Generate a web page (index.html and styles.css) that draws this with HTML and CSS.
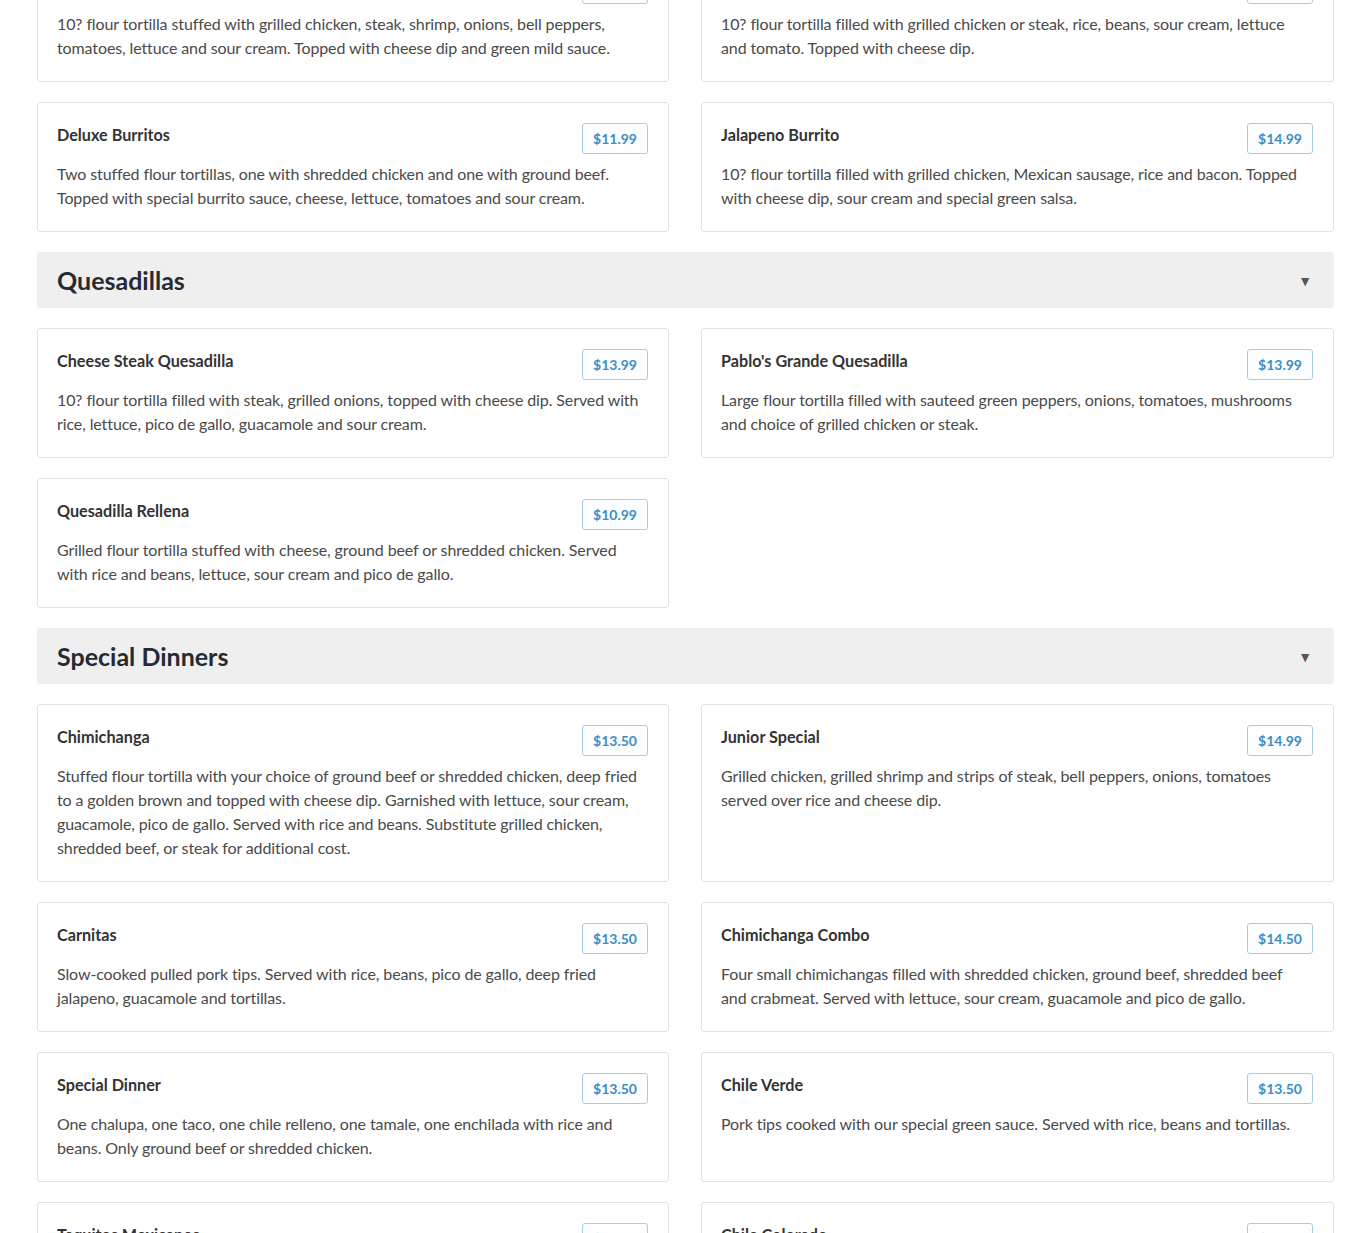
FILE: index.html
```html
<!DOCTYPE html>
<html>
<head>
<meta charset="utf-8">
<link rel="stylesheet" href="styles.css">
</head>
<body>
<div class="menu">
  <div class="grid">
    <div class="card">
      <div class="card-head"><span class="name">Fajita Burrito</span><span class="price">$14.99</span></div>
      <p class="desc">10? flour tortilla stuffed with grilled chicken, steak, shrimp, onions, bell peppers, tomatoes, lettuce and sour cream. Topped with cheese dip and green mild sauce.</p>
    </div>
    <div class="card">
      <div class="card-head"><span class="name">Burrito Grande</span><span class="price">$13.99</span></div>
      <p class="desc">10? flour tortilla filled with grilled chicken or steak, rice, beans, sour cream, lettuce and tomato. Topped with cheese dip.</p>
    </div>
    <div class="card">
      <div class="card-head"><span class="name">Deluxe Burritos</span><span class="price">$11.99</span></div>
      <p class="desc">Two stuffed flour tortillas, one with shredded chicken and one with ground beef. Topped with special burrito sauce, cheese, lettuce, tomatoes and sour cream.</p>
    </div>
    <div class="card">
      <div class="card-head"><span class="name">Jalapeno Burrito</span><span class="price">$14.99</span></div>
      <p class="desc">10? flour tortilla filled with grilled chicken, Mexican sausage, rice and bacon. Topped with cheese dip, sour cream and special green salsa.</p>
    </div>
  </div>

  <div class="category"><h2>Quesadillas</h2><span class="caret">▼</span></div>
  <div class="grid">
    <div class="card">
      <div class="card-head"><span class="name">Cheese Steak Quesadilla</span><span class="price">$13.99</span></div>
      <p class="desc">10? flour tortilla filled with steak, grilled onions, topped with cheese dip. Served with rice, lettuce, pico de gallo, guacamole and sour cream.</p>
    </div>
    <div class="card">
      <div class="card-head"><span class="name">Pablo's Grande Quesadilla</span><span class="price">$13.99</span></div>
      <p class="desc">Large flour tortilla filled with sauteed green peppers, onions, tomatoes, mushrooms and choice of grilled chicken or steak.</p>
    </div>
    <div class="card">
      <div class="card-head"><span class="name">Quesadilla Rellena</span><span class="price">$10.99</span></div>
      <p class="desc">Grilled flour tortilla stuffed with cheese, ground beef or shredded chicken. Served with rice and beans, lettuce, sour cream and pico de gallo.</p>
    </div>
  </div>

  <div class="category"><h2>Special Dinners</h2><span class="caret">▼</span></div>
  <div class="grid">
    <div class="card">
      <div class="card-head"><span class="name">Chimichanga</span><span class="price">$13.50</span></div>
      <p class="desc">Stuffed flour tortilla with your choice of ground beef or shredded chicken, deep fried to a golden brown and topped with cheese dip. Garnished with lettuce, sour cream, guacamole, pico de gallo. Served with rice and beans. Substitute grilled chicken, shredded beef, or steak for additional cost.</p>
    </div>
    <div class="card">
      <div class="card-head"><span class="name">Junior Special</span><span class="price">$14.99</span></div>
      <p class="desc">Grilled chicken, grilled shrimp and strips of steak, bell peppers, onions, tomatoes served over rice and cheese dip.</p>
    </div>
    <div class="card">
      <div class="card-head"><span class="name">Carnitas</span><span class="price">$13.50</span></div>
      <p class="desc">Slow-cooked pulled pork tips. Served with rice, beans, pico de gallo, deep fried jalapeno, guacamole and tortillas.</p>
    </div>
    <div class="card">
      <div class="card-head"><span class="name">Chimichanga Combo</span><span class="price">$14.50</span></div>
      <p class="desc">Four small chimichangas filled with shredded chicken, ground beef, shredded beef and crabmeat. Served with lettuce, sour cream, guacamole and pico de gallo.</p>
    </div>
    <div class="card">
      <div class="card-head"><span class="name">Special Dinner</span><span class="price">$13.50</span></div>
      <p class="desc">One chalupa, one taco, one chile relleno, one tamale, one enchilada with rice and beans. Only ground beef or shredded chicken.</p>
    </div>
    <div class="card">
      <div class="card-head"><span class="name">Chile Verde</span><span class="price">$13.50</span></div>
      <p class="desc">Pork tips cooked with our special green sauce. Served with rice, beans and tortillas.</p>
    </div>
    <div class="card">
      <div class="card-head"><span class="name">Taquitos Mexicanos</span><span class="price">$12.99</span></div>
      <p class="desc">Three corn tortillas filled with steak or chicken, topped with cilantro and onions. Served with rice and beans.</p>
    </div>
    <div class="card">
      <div class="card-head"><span class="name">Chile Colorado</span><span class="price">$13.50</span></div>
      <p class="desc">Pork tips cooked with our special red sauce. Served with rice, beans and tortillas.</p>
    </div>
  </div>
</div>
</body>
</html>
```

FILE: styles.css
```css
html, body {
  margin: 0;
  padding: 0;
  background: #ffffff;
}
body {
  font-family: Lato, "Open Sans", sans-serif;
  color: #333;
  overflow: hidden;
  height: 1233px;
}
.menu {
  margin: -48px 36px 0 37px;
  display: flex;
  flex-direction: column;
  gap: 20px;
}
.grid {
  display: grid;
  grid-template-columns: 632fr 633fr;
  column-gap: 32px;
  row-gap: 20px;
}
.card {
  border: 1px solid #e2e2e2;
  border-radius: 3px;
  background: #fff;
  padding: 20px 20px 21px 19px;
}
.card-head {
  display: flex;
  justify-content: space-between;
  align-items: center;
  height: 31px;
  margin-bottom: 8px;
}
.name {
  font-weight: 700;
  font-size: 16.2px;
  color: #333;
  position: relative;
  top: -4px;
}
.price {
  display: inline-block;
  box-sizing: border-box;
  height: 31px;
  line-height: 29px;
  padding: 0 10px;
  border: 1px solid #a9cde0;
  border-radius: 3px;
  background: #fbfdff;
  color: #3d8ec4;
  font-weight: 700;
  font-size: 14px;
}
.desc {
  margin: 0 2px 0 0;
  font-size: 16px;
  letter-spacing: -0.11px;
  line-height: 24px;
  color: #4a4a4a;
}
.category {
  display: flex;
  justify-content: space-between;
  align-items: center;
  background: #efefef;
  border-radius: 3px;
  height: 56px;
  padding: 0 22px 0 20px;
}
.category h2 {
  margin: 0;
  font-size: 25px;
  font-weight: 700;
  color: #262b33;
}
.caret {
  font-size: 14px;
  color: #555;
}
```
